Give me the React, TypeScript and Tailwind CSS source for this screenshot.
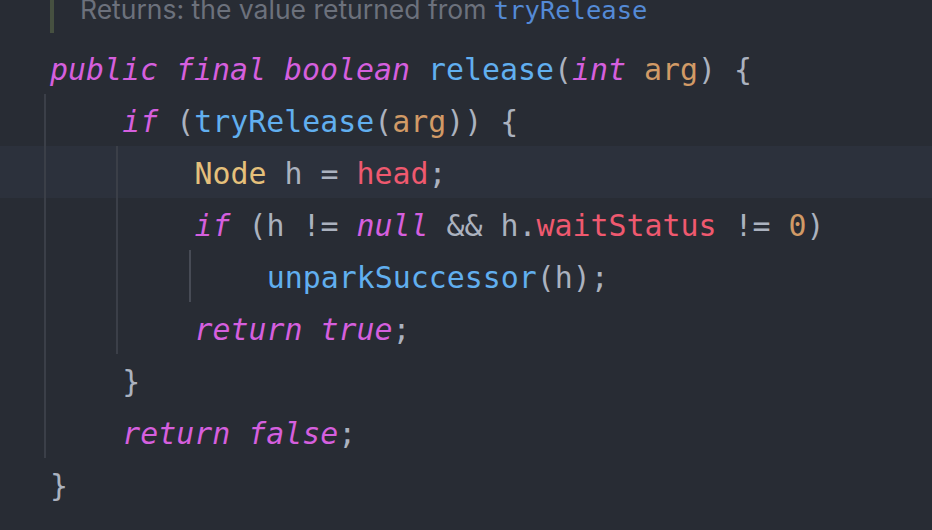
import React from "react";

type Tok = { t: string; c: string; i?: boolean };

const KW = "#d55fde";
const FN = "#61afef";
const PARAM = "#d19a66";
const TYPE = "#e5c07b";
const FIELD = "#ef596f";
const PLAIN = "#abb2bf";

const kw = (t: string): Tok => ({ t, c: KW, i: true });
const p = (t: string): Tok => ({ t, c: PLAIN });

const lines: { indent: number; toks: Tok[]; hl?: boolean; activeGuide?: boolean }[] = [
  {
    indent: 0,
    toks: [
      kw("public"), p(" "), kw("final"), p(" "), kw("boolean"), p(" "),
      { t: "release", c: FN }, p("("), kw("int"), p(" "), { t: "arg", c: PARAM }, p(") {"),
    ],
  },
  {
    indent: 1,
    toks: [kw("if"), p(" ("), { t: "tryRelease", c: FN }, p("("), { t: "arg", c: PARAM }, p(")) {")],
  },
  {
    indent: 2,
    hl: true,
    toks: [{ t: "Node", c: TYPE }, p(" h = "), { t: "head", c: FIELD }, p(";")],
  },
  {
    indent: 2,
    toks: [
      kw("if"), p(" (h != "), kw("null"), p(" && h."), { t: "waitStatus", c: FIELD }, p(" != "),
      { t: "0", c: PARAM }, p(")"),
    ],
  },
  {
    indent: 3,
    activeGuide: true,
    toks: [{ t: "unparkSuccessor", c: FN }, p("(h);")],
  },
  { indent: 2, toks: [kw("return"), p(" "), kw("true"), p(";")] },
  { indent: 1, toks: [p("}")] },
  { indent: 1, toks: [kw("return"), p(" "), kw("false"), p(";")] },
  { indent: 0, toks: [p("}")] },
];

export default function App() {
  return (
    <div className="w-[932px] h-[530px] overflow-hidden bg-[#282c34]">
      {/* doc comment tail */}
      <div className="flex h-[42px] items-start">
        <div className="ml-[50px] w-[4px] h-[33px] bg-[#465040]" />
        <div
          className="ml-[26px] -mt-[4px] text-[26.5px] leading-[26.5px] whitespace-pre text-[#6c717c]"
          style={{ fontFamily: "Inter, 'Noto Sans', sans-serif" }}
        >
          Returns: the value returned from{" "}
          <span
            className="text-[25.5px] text-[#548ad6]"
            style={{ fontFamily: "'DejaVu Sans Mono', monospace" }}
          >
            tryRelease
          </span>
        </div>
      </div>
      {/* code */}
      <div
        className="text-[29.9px] leading-[52px] whitespace-pre"
        style={{ fontFamily: "'DejaVu Sans Mono', monospace" }}
      >
        {lines.map((ln, idx) => (
          <div key={idx} className={`flex h-[52px] items-stretch ${ln.hl ? "bg-[#2c313c]" : ""}`}>
            <div className="w-[44px] shrink-0" />
            {Array.from({ length: ln.indent }).map((_, k) => (
              <React.Fragment key={k}>
                <div
                  className={`w-[2px] shrink-0 ${
                    ln.activeGuide && k === ln.indent - 1 ? "bg-[#474b55]" : "bg-[#3b3f48]"
                  }`}
                />
                <div className="w-[70.25px] shrink-0" />
              </React.Fragment>
            ))}
            <div className="w-[6px] shrink-0" />
            <div className="pt-[2px]">
              {ln.toks.map((tk, j) => (
                <span key={j} style={{ color: tk.c }} className={tk.i ? "italic" : ""}>
                  {tk.t}
                </span>
              ))}
            </div>
          </div>
        ))}
      </div>
    </div>
  );
}
